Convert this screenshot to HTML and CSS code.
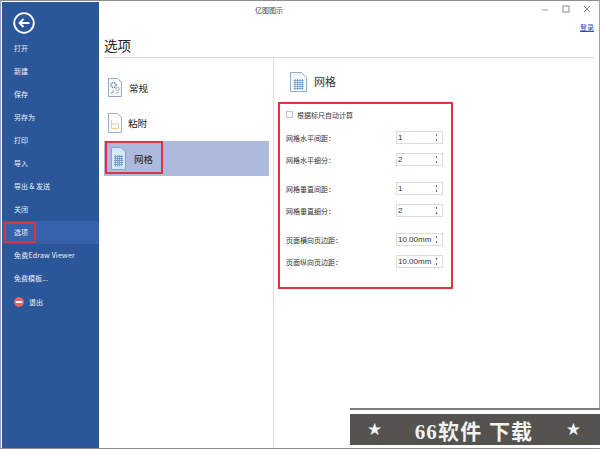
FILE: index.html
```html
<!DOCTYPE html>
<html lang="zh">
<head>
<meta charset="utf-8">
<title>亿图图示</title>
<link rel="stylesheet" href="styles.css">
</head>
<body>
<div class="window">
  <nav class="sidebar">
    <svg class="back" width="22" height="22" viewBox="0 0 22 22"><circle cx="11" cy="11" r="9.8" fill="none" stroke="#fff" stroke-width="1.8"/><path d="M16.5 11H6.5M10.5 7L6.5 11L10.5 15" fill="none" stroke="#fff" stroke-width="1.8"/></svg>
    <a class="nav">打开</a>
    <a class="nav">新建</a>
    <a class="nav">保存</a>
    <a class="nav">另存为</a>
    <a class="nav">打印</a>
    <a class="nav">导入</a>
    <a class="nav">导出 &amp; 发送</a>
    <a class="nav">关闭</a>
    <a class="nav nav-active">选项<span class="mark mark-nav"></span></a>
    <a class="nav nav-wide">免费Edraw Viewer</a>
    <a class="nav">免费模板...</a>
    <a class="nav nav-exit"><svg width="10" height="10" viewBox="0 0 10 10"><circle cx="5" cy="5" r="5" fill="#e4606d"/><rect x="1.8" y="4" width="6.4" height="2" fill="#fff"/></svg>退出</a>
  </nav>
  <main class="pane">
    <header class="titlebar">
      <span class="app-title">亿图图示</span>
      <span class="controls">
        <svg width="8" height="8" viewBox="0 0 8 8"><path d="M1 5H7" stroke="#999" stroke-width="1"/></svg>
        <svg width="8" height="8" viewBox="0 0 8 8"><rect x="1" y="1" width="6" height="6" fill="none" stroke="#888"/></svg>
        <svg width="8" height="8" viewBox="0 0 8 8"><path d="M1 1L7 7M7 1L1 7" stroke="#888"/></svg>
      </span>
    </header>
    <div class="login-row"><a class="login">登录</a></div>
    <h1 class="page-title">选项</h1>
    <div class="content">
      <ul class="cats">
        <li class="cat">
          <svg width="14" height="19" viewBox="0 0 14 19"><path d="M.5.5H9.5L13.5 4.5V18.5H.5Z" fill="#fbfcfe" stroke="#93a8c8"/><circle cx="5.5" cy="7" r="2.6" fill="#e6ebf3" stroke="#7f8fab" stroke-width="1.4" stroke-dasharray="1.4 .7"/><circle cx="5.5" cy="7" r=".9" fill="#fff"/><circle cx="9.5" cy="11" r="1.7" fill="#f4ecdf" stroke="#8f9ab0" stroke-width="1" stroke-dasharray="1 .5"/><path d="M3 15.5L6 12.5M8 15L11 14.5" stroke="#9aa8c0" stroke-width="1.1"/></svg>
          常规
        </li>
        <li class="cat cat-paste">
          <svg width="14" height="20" viewBox="0 0 14 20"><path d="M.5.5H9.5L13.5 4.5V19.5H.5Z" fill="#fff" stroke="#9aaecb"/><path d="M3.5 7V15.5H10.5V11H3.5" fill="none" stroke="#f0cb98"/></svg>
          粘附
        </li>
        <li class="cat cat-active">
          <svg width="15" height="23" viewBox="0 0 15 23"><path d="M.5.5H10L14.5 5V22.5H.5Z" fill="#d5e8f8" stroke="#7ea6d0"/><path d="M3 9.5H12M3 11.5H12M3 13.5H12M3 15.5H12M3 17.5H12M4.5 8V19.5M6.5 8V19.5M8.5 8V19.5M10.5 8V19.5" stroke="#5f88c0" stroke-width=".7"/></svg>
          网格
          <span class="mark mark-cat"></span>
        </li>
      </ul>
      <section class="detail">
        <h2 class="detail-title">
          <svg width="17" height="20" viewBox="0 0 17 20"><path d="M.5.5H11.5L16.5 5.5V19.5H.5Z" fill="#f4f8fc" stroke="#8eaed2"/><path d="M3.5 8.5H13.5M3.5 10.5H13.5M3.5 12.5H13.5M3.5 14.5H13.5M3.5 16.5H13.5M5 7V18M7.5 7V18M10 7V18M12.5 7V18" stroke="#6690c4" stroke-width=".7"/></svg>
          网格
        </h2>
        <form class="form">
          <label class="check"><span class="box"></span>根据标尺自动计算</label>
          <div class="group">
            <div class="row"><span class="label">网格水平间距：</span><span class="spin"><span>1</span><i class="arrows"></i></span></div>
            <div class="row"><span class="label">网格水平细分：</span><span class="spin"><span>2</span><i class="arrows"></i></span></div>
          </div>
          <div class="group">
            <div class="row"><span class="label">网格垂直间距：</span><span class="spin"><span>1</span><i class="arrows"></i></span></div>
            <div class="row"><span class="label">网格垂直细分：</span><span class="spin"><span>2</span><i class="arrows"></i></span></div>
          </div>
          <div class="group">
            <div class="row"><span class="label">页面横向页边距：</span><span class="spin"><span>10.00mm</span><i class="arrows"></i></span></div>
            <div class="row"><span class="label">页面纵向页边距：</span><span class="spin"><span>10.00mm</span><i class="arrows"></i></span></div>
          </div>
        </form>
      </section>
    </div>
  </main>
</div>
<aside class="watermark"><div class="wm-band"><span class="star">★</span><span class="wm-text">66软件 下载</span><span class="star">★</span></div></aside>
</body>
</html>
```
FILE: styles.css
```css
* { box-sizing: border-box; }
html, body { margin: 0; padding: 0; }
body {
  width: 600px;
  height: 450px;
  overflow: hidden;
  position: relative;
  background: #fff;
  font-family: "Noto Sans CJK SC", "Liberation Sans", sans-serif;
}
.window {
  display: flex;
  width: 600px;
  height: 449px;
  border-top: 1px solid #8a8f96;
  border-left: 1px solid #8ea0bd;
  border-bottom: 1px solid #8a8f96;
  border-right: 1px solid #a0a5ab;
  padding-left: 1px;
}
.sidebar {
  width: 97px;
  flex: none;
  margin-top: 1px;
  background: #2b579a;
  display: flex;
  flex-direction: column;
}
.back { margin: 10px 0 2px 11px; flex: none; }
.nav {
  display: flex;
  align-items: center;
  gap: 5px;
  height: 23.1px;
  padding-left: 12px;
  font-size: 7px;
  color: #eef2f8;
  position: relative;
}
.nav-wide { letter-spacing: .2px; }
.nav-active { background: #3761ab; }
.nav-exit svg { flex: none; }
.mark {
  position: absolute;
  border: 2px solid #dc3540;
}
.mark-nav { left: 2px; top: 1px; width: 32px; height: 21px; }
.pane {
  flex: 1;
  min-width: 0;
  display: flex;
  flex-direction: column;
}
.titlebar {
  display: flex;
  align-items: center;
  height: 18px;
  flex: none;
  padding: 0 8px 0 156px;
}
.app-title { font-size: 7px; color: #444; }
.controls {
  margin-left: auto;
  display: flex;
  gap: 13px;
  margin-top: -2px;
}
.login-row {
  display: flex;
  justify-content: flex-end;
  height: 16px;
  flex: none;
  padding-right: 5px;
  align-items: center;
}
.login { font-size: 7px; color: #3347c8; text-decoration: underline; }
.page-title {
  margin: 0 5px;
  height: 23px;
  flex: none;
  border-bottom: 1px solid #d9d9d9;
  font-size: 13.5px;
  font-weight: 400;
  line-height: 21px;
  color: #222;
}
.content {
  flex: 1;
  display: flex;
  min-height: 0;
}
.cats {
  list-style: none;
  margin: 0;
  padding: 12px 4px 0 5px;
  width: 175px;
  flex: none;
  border-right: 1px solid #dedede;
}
.cat {
  display: flex;
  align-items: center;
  gap: 7px;
  height: 35px;
  padding-left: 4px;
  font-size: 9.5px;
  color: #222;
  position: relative;
}
.cat-paste { gap: 6px; }
.cat-active {
  margin-top: 1px;
  background: #adbadc;
  padding-left: 7px;
  gap: 8px;
}
.mark-cat { left: 1px; top: 0; width: 58px; height: 33px; }
.detail {
  flex: 1;
  padding: 13px 0 0 4px;
}
.detail-title {
  display: flex;
  align-items: center;
  gap: 7px;
  margin: 0 0 10px 12px;
  height: 21px;
  font-size: 11px;
  line-height: 23px;
  font-weight: 400;
  color: #333;
}
.form {
  width: 175px;
  height: 187px;
  border: 2px solid #dc3540;
  padding: 5px 8px 0 6px;
  font-size: 7px;
  color: #333;
}
.check {
  display: flex;
  align-items: center;
  gap: 4px;
  height: 11px;
}
.box {
  width: 7px;
  height: 7px;
  border: 1px solid #c4c4c4;
  background: #fff;
}
.group { margin-top: 16px; display: flex; flex-direction: column; gap: 9px; }
.group:first-of-type { margin-top: 11px; }
.row {
  display: flex;
  align-items: center;
  justify-content: space-between;
  height: 13px;
}
.spin {
  display: flex;
  align-items: center;
  justify-content: space-between;
  width: 47px;
  height: 13px;
  padding: 0 4px 0 1px;
  border: 1px solid #dcdcdc;
  font-size: 8px;
  font-family: "Liberation Sans", sans-serif;
  color: #333;
}
.arrows {
  display: block;
  width: 3px;
  height: 9px;
  background:
    linear-gradient(#666, #666) center 1px / 1px 2px no-repeat,
    linear-gradient(#666, #666) center 6px / 1px 2px no-repeat;
}
.watermark {
  position: absolute;
  left: 350px;
  bottom: 2px;
  width: 250px;
  height: 40px;
  background: #fff;
  border-top: 2px solid #7c7c7c;
  padding-top: 4px;
}
.wm-band {
  height: 31px;
  background: #55534f;
  display: flex;
  align-items: center;
  justify-content: space-between;
  padding: 0 19px 0 17px;
  color: #f2f2f2;
}
.star { font-family: "DejaVu Sans", sans-serif; font-size: 17px; line-height: 1; }
.wm-text {
  font-family: "Liberation Serif", "Noto Sans CJK SC", serif;
  font-weight: 700;
  font-size: 21px;
  letter-spacing: 1.2px;
}
```
